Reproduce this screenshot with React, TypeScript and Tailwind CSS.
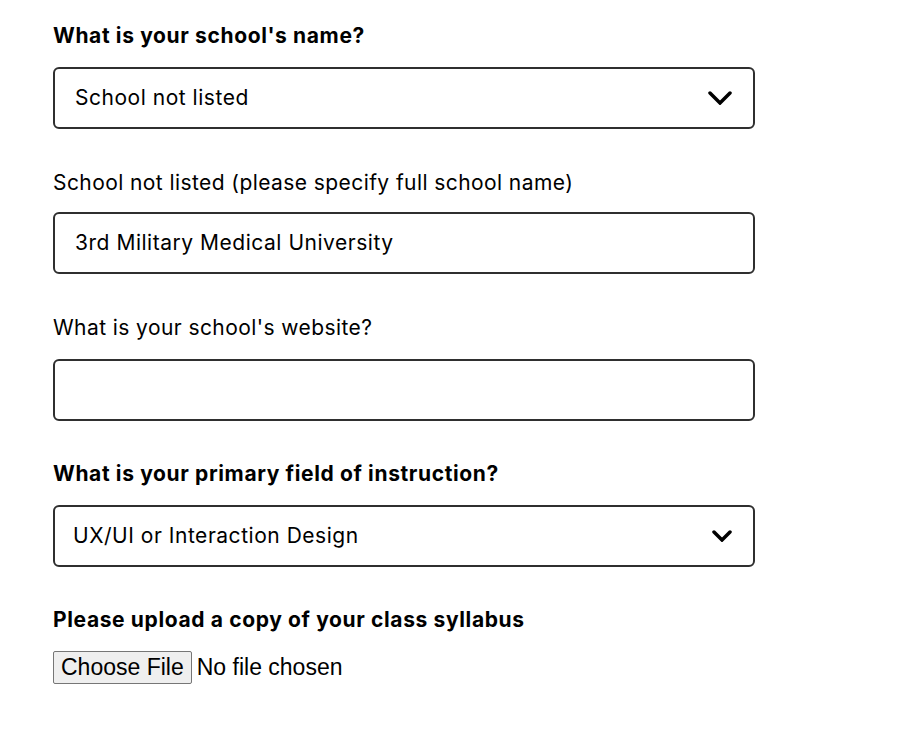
const font = { fontFamily: "Inter, 'Noto Sans', sans-serif" };

function Label({ children, bold, gap = "mb-[17px]" }: { children: React.ReactNode; bold?: boolean; gap?: string }) {
  return (
    <label
      className={`block text-[21px] leading-[28px] text-black ${gap} ${bold ? "font-bold tracking-[0.03em]" : "font-normal tracking-[0.02em]"}`}
    >
      {children}
    </label>
  );
}

function Chevron({ w, h }: { w: number; h: number }) {
  return (
    <svg width={w} height={h} viewBox={`0 0 ${w} ${h}`} fill="none">
      <polyline
        points={`2,2 ${w / 2},${h - 2} ${w - 2},2`}
        stroke="#000"
        strokeWidth={3.5}
        strokeLinecap="round"
        strokeLinejoin="miter"
      />
    </svg>
  );
}

function SelectBox({ value, pad, small }: { value: string; pad: string; small?: boolean }) {
  return (
    <div
      className={`flex h-[62px] w-[702px] items-center justify-between rounded-[6px] border-2 border-[#2f2f2f] bg-white ${pad} pr-[21px]`}
    >
      <span className="text-[21px] tracking-[0.025em] text-black">{value}</span>
      {small ? <Chevron w={20} h={12} /> : <Chevron w={24} h={14} />}
    </div>
  );
}

function TextBox({ value }: { value?: string }) {
  return (
    <div className="flex h-[62px] w-[702px] items-center rounded-[6px] border-2 border-[#2f2f2f] bg-white pl-[20px]">
      <span className="text-[21px] tracking-[0.025em] text-black">{value}</span>
    </div>
  );
}

export default function App() {
  return (
    <div className="min-h-screen bg-white pl-[53px] pt-[22px]" style={font}>
      <div className="mb-[40px]">
        <Label bold>What is your school's name?</Label>
        <SelectBox value="School not listed" pad="pl-[20px]" />
      </div>
      <div className="mb-[40px]">
        <Label gap="mb-[15px]">School not listed (please specify full school name)</Label>
        <TextBox value="3rd Military Medical University" />
      </div>
      <div className="mb-[39px]">
        <Label>What is your school's website?</Label>
        <TextBox />
      </div>
      <div className="mb-[39px]">
        <Label bold>What is your primary field of instruction?</Label>
        <SelectBox value="UX/UI or Interaction Design" pad="pl-[18px]" small />
      </div>
      <div>
        <Label bold>Please upload a copy of your class syllabus</Label>
        <input
          type="file"
          className="block text-[23px] leading-[27px] text-black file:mr-[5px] file:rounded-[2px] file:border file:border-solid file:border-[#767676] file:bg-[#efefef] file:px-[7px] file:py-[2px] file:text-[23px] file:text-black"
          style={{ fontFamily: "'Liberation Sans', Arial, sans-serif" }}
        />
      </div>
    </div>
  );
}
